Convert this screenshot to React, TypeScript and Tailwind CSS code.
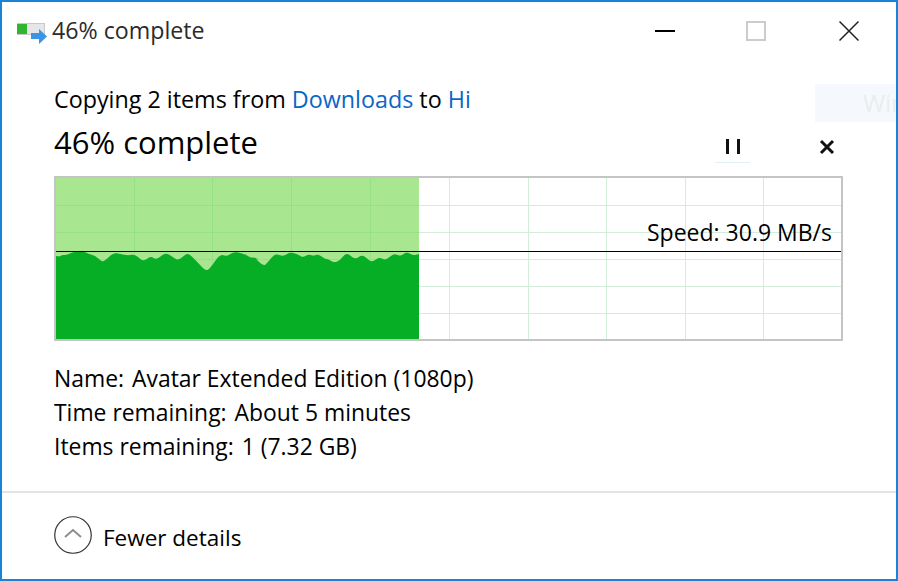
const W = 785;
const H = 161;

// traced from the graph, page coordinates
const traceA = [[48,258],[60,260],[66,254],[78,256],[90,250],[100,246],[130,243],[145,252],[165,256],[185,275],[195,272],[220,248],[240,252],[265,257],[285,252],[305,272],[318,270],[332,258],[350,270],[375,248],[395,258],[415,273],[440,249],[455,258],[480,285],[498,303],[510,295],[540,252],[560,260],[580,245],[610,250],[630,263],[645,262],[660,272]];
const traceB = [[0,250],[20,254],[30,264],[45,262],[70,290],[85,275],[105,250],[130,260],[150,246],[175,254],[190,263],[205,252],[220,258],[235,252],[255,267],[265,267],[280,278],[300,272],[320,246],[345,270],[367,252],[390,274],[400,274],[418,261],[437,272],[462,249],[480,260],[500,245],[520,257],[537,252]];

const toLocal = (x: number, y: number, left: number) => [x / 3 + left - 56, y / 3 + 170 - 178];
const fillEnd = 363;
const pts = [
  ...traceA.map(([x, y]) => toLocal(x, y, 40)),
  ...traceB.map(([x, y]) => toLocal(x, y, 240)),
];

// soft peaks: run the curve through the midpoints
function areaPath() {
  let d = `M0,${H} L${pts[0][0]},${pts[0][1]}`;
  for (let i = 1; i < pts.length - 1; i++) {
    const mx = (pts[i][0] + pts[i + 1][0]) / 2;
    const my = (pts[i][1] + pts[i + 1][1]) / 2;
    d += ` Q${pts[i][0]},${pts[i][1]} ${mx.toFixed(1)},${my.toFixed(1)}`;
  }
  return `${d} L${fillEnd},${pts[pts.length - 1][1]} L${fillEnd},${H} Z`;
}

const vLines = [78, 156, 235, 314, 393, 472, 550, 629, 707];
const hLines = [27, 54, 81, 108, 135];

function Graph() {
  return (
    <div className="relative mt-[15px] h-[165px] w-[789px] border-2 border-[#c4c4c4] bg-white">
      <svg width={W} height={H} viewBox={`0 0 ${W} ${H}`} className="block">
        {vLines.map((x) => (
          <rect key={x} x={x} y={0} width={1} height={H} fill="#d2eedb" />
        ))}
        {hLines.map((y) => (
          <rect key={y} x={0} y={y} width={W} height={1} fill="#d2eedb" />
        ))}
        <rect x={0} y={0} width={fillEnd} height={H} fill="#a8e68f" />
        {vLines.filter((x) => x < fillEnd).map((x) => (
          <rect key={x} x={x} y={0} width={1} height={H} fill="#95e186" />
        ))}
        {hLines.map((y) => (
          <rect key={y} x={0} y={y} width={fillEnd} height={1} fill="#95e186" />
        ))}
        <path d={areaPath()} fill="#06ae26" />
        <rect x={0} y={73} width={W} height={1} fill="#000000" />
      </svg>
      <span className="absolute right-[9px] top-[39px] text-[23px] leading-[30px] text-black">Speed: 30.9 MB/s</span>
    </div>
  );
}

function DetailRow({ label, value }: { label: string; value: string }) {
  return (
    <div className="flex h-[34px] items-center gap-[8px]">
      <span>{label}</span>
      <span>{value}</span>
    </div>
  );
}

export default function App() {
  return (
    <div
      className="relative flex h-[581px] w-[898px] flex-col overflow-hidden border-2 border-[#1883d7] bg-white text-black"
      style={{ fontFamily: '"Open Sans", "Noto Sans", sans-serif' }}
    >
      {/* Title bar */}
      <div className="flex h-[58px] shrink-0 items-center">
        <svg width="30" height="24" viewBox="0 0 30 24" className="ml-[15px] mr-[5px] mt-[6px] shrink-0">
          <rect x="0.5" y="1.5" width="27" height="11" fill="#e6e6e6" stroke="#c8c8c8" />
          <rect x="0" y="2" width="10" height="10" fill="#2fb52f" />
          <path d="M14 11h8V7l8 7.5-8 7.5v-5h-8z" fill="#3d94e6" />
        </svg>
        <span className="-mt-[2px] text-[23.2px] text-[#2b2b2b]">46% complete</span>
        <div className="ml-auto flex items-center">
          <div className="h-[2px] w-[20px] bg-black" />
          <div className="ml-[71px] h-[20px] w-[20px] border-2 border-[#cccccc]" />
          <svg width="20" height="20" viewBox="0 0 20 20" className="ml-[73px] mr-[37px]">
            <path d="M.5.5l19 19M19.5.5l-19 19" stroke="#222222" strokeWidth="1.5" fill="none" />
          </svg>
        </div>
      </div>

      {/* Faded watermark behind the window */}
      <div className="absolute right-0 top-[82px] flex h-[38px] w-[81px] items-center overflow-hidden bg-[#f5f9fe] pl-[48px] text-[24px] text-[#ececec]">
        Wir
      </div>

      <div className="flex flex-1 flex-col pl-[52px]">
        <div className="mt-[24px] text-[23.3px] leading-[30px]">
          Copying 2 items from <span className="text-[#0a66c8]">Downloads</span> to <span className="text-[#0a66c8]">Hi</span>
        </div>
        <div className="mt-[13px] flex h-[34px] items-center text-[31px] leading-[34px]">
          <span className="-mt-[4px]">46% complete</span>
          <div className="relative ml-auto mt-[4px] flex h-[34px] w-[35px] items-center justify-center gap-[8px]">
            <div className="h-[15px] w-[3px] bg-[#111111]" />
            <div className="h-[15px] w-[3px] bg-[#111111]" />
            <div className="absolute bottom-0 left-0 h-px w-full bg-[#dff1fb]" />
          </div>
          <svg width="16" height="16" viewBox="0 0 16 16" className="ml-[69px] mr-[61px] mt-[6px]">
            <path d="M2 2l12 12M14 2L2 14" stroke="#111111" strokeWidth="3" fill="none" />
          </svg>
        </div>
        <Graph />
        <div className="mt-[21px] text-[22.9px] leading-[30px]">
          <DetailRow label="Name:" value="Avatar Extended Edition (1080p)" />
          <DetailRow label="Time remaining:" value="About 5 minutes" />
          <DetailRow label="Items remaining:" value="1 (7.32 GB)" />
        </div>
      </div>

      {/* Footer */}
      <div className="flex h-[88px] shrink-0 items-center gap-[11px] border-t-2 border-[#e3e3e3] pb-[2px] pl-[52px] text-[22.5px]">
        <svg width="38" height="38" viewBox="0 0 38 38" className="shrink-0">
          <circle cx="19" cy="19" r="18.25" fill="white" stroke="#333333" strokeWidth="1.2" />
          <path d="M11 21l8-7 8 7" stroke="#8e8e8e" strokeWidth="2" fill="none" />
        </svg>
        <span className="mt-[5px]">Fewer details</span>
      </div>
    </div>
  );
}
